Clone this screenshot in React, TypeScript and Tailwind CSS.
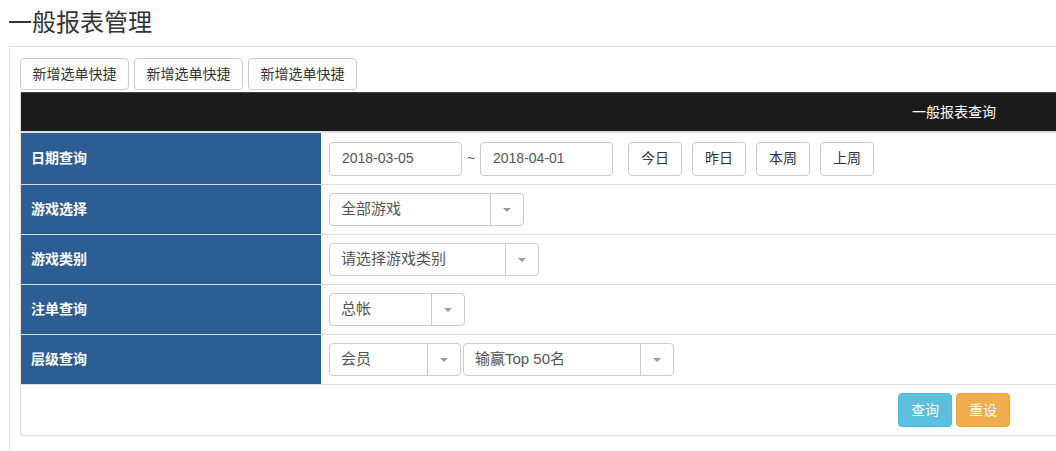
import React from "react";

const rowLabel = "w-[300px] shrink-0 self-stretch flex items-center bg-[#2c5d95] pl-[10px] text-[14px] font-bold text-white";

function Caret() {
  return (
    <svg width="8" height="4" viewBox="0 0 8 4">
      <path d="M0 0 L8 0 L4 4 Z" fill="#999" />
    </svg>
  );
}

function Select({ text, width, size = "text-[15px]" }: { text: string; width: string; size?: string }) {
  return (
    <div className={`${width} h-[33px] flex border border-[#ccc] rounded-[4px] bg-white`}>
      <div className={`flex-1 flex items-center pl-[11px] ${size} text-[#555] border-r border-[#ccc]`}>{text}</div>
      <div className="w-[32px] flex items-center justify-center">
        <Caret />
      </div>
    </div>
  );
}

function Btn({ children }: { children: React.ReactNode }) {
  return (
    <button className="w-[54px] h-[34px] border border-[#ccc] rounded-[4px] bg-white text-[14px] text-[#333]">
      {children}
    </button>
  );
}

export default function App() {
  return (
    <div
      className="w-[1056px] h-[451px] overflow-hidden bg-white text-[#333]"
      style={{ fontFamily: '"Liberation Sans", "Noto Sans CJK SC", sans-serif' }}
    >
      <h1 className="mt-[8px] pl-[8px] text-[24px] leading-[30px] font-normal text-[#333]">一般报表管理</h1>

      <div className="mt-[8px] ml-[9px] w-[1900px] h-[420px] border-l border-t border-[#ddd] pt-[11px] pl-[10px]">
        <div className="flex gap-[5px]">
          {["新增选单快捷", "新增选单快捷", "新增选单快捷"].map((t, i) => (
            <button
              key={i}
              className="w-[109px] h-[32px] border border-[#ccc] rounded-[4px] bg-white text-[14px] text-[#333]"
            >
              {t}
            </button>
          ))}
        </div>

        <div className="mt-[2px] w-[1868px] border-l border-r border-b border-[#ddd] rounded-b-[4px] shadow-[0_1px_1px_rgba(0,0,0,0.05)]">
          <div className="h-[41px] bg-[#1b1b1b] border-t border-[#444] border-b-2 border-b-[#ddd] flex items-center justify-center text-[14px] text-white">
            一般报表查询
          </div>

          <div className="h-[52px] flex items-center border-b border-[#ddd]">
            <div className={rowLabel}>日期查询</div>
            <div className="flex items-center pl-[8px]">
              <div className="w-[133px] h-[34px] flex items-center pl-[12px] border border-[#ccc] rounded-[4px] text-[14px] text-[#555]">
                2018-03-05
              </div>
              <div className="w-[18px] text-center text-[14px] text-[#555]">~</div>
              <div className="w-[133px] h-[34px] flex items-center pl-[12px] border border-[#ccc] rounded-[4px] text-[14px] text-[#555]">
                2018-04-01
              </div>
              <div className="ml-[15px] flex gap-[10px]">
                <Btn>今日</Btn>
                <Btn>昨日</Btn>
                <Btn>本周</Btn>
                <Btn>上周</Btn>
              </div>
            </div>
          </div>

          <div className="h-[50px] flex items-center border-b border-[#ddd]">
            <div className={rowLabel}>游戏选择</div>
            <div className="pl-[8px]">
              <Select text="全部游戏" width="w-[195px]" />
            </div>
          </div>

          <div className="h-[50px] flex items-center border-b border-[#ddd]">
            <div className={rowLabel}>游戏类别</div>
            <div className="pl-[8px]">
              <Select text="请选择游戏类别" width="w-[210px]" />
            </div>
          </div>

          <div className="h-[50px] flex items-center border-b border-[#ddd]">
            <div className={rowLabel}>注单查询</div>
            <div className="pl-[8px]">
              <Select text="总帐" width="w-[136px]" />
            </div>
          </div>

          <div className="h-[50px] flex items-center border-b border-[#ddd]">
            <div className={rowLabel}>层级查询</div>
            <div className="pl-[8px] flex gap-[2px]">
              <Select text="会员" width="w-[132px]" />
              <Select text="输赢Top 50名" width="w-[211px]" />
            </div>
          </div>

          <div className="h-[50px] flex items-center justify-center gap-[4px]">
            <button className="w-[54px] h-[34px] rounded-[4px] border border-[#46b8da] bg-[#5bc0de] text-[14px] text-white">
              查询
            </button>
            <button className="w-[54px] h-[34px] rounded-[4px] border border-[#eea236] bg-[#f0ad4e] text-[14px] text-white">
              重设
            </button>
          </div>
        </div>
      </div>
    </div>
  );
}
